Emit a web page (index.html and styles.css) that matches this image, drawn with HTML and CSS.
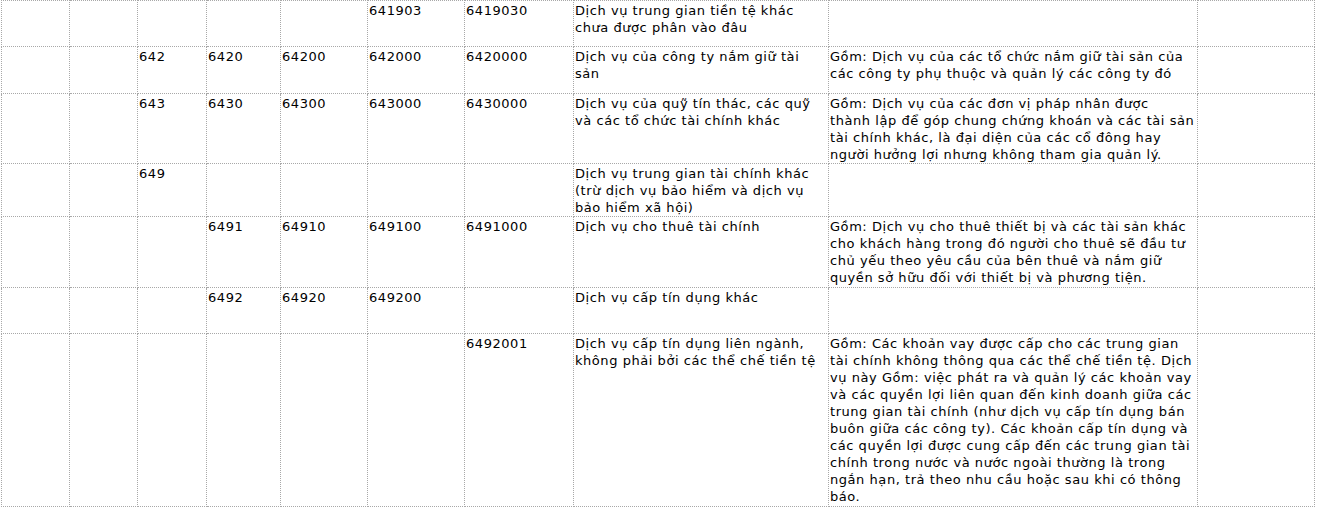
FILE: index.html
```html
<!DOCTYPE html>
<html lang="vi">
<head>
<meta charset="utf-8">
<title>Bảng mã</title>
<link rel="stylesheet" href="styles.css">
</head>
<body>
<div class="wrap">
<table class="codes">
<colgroup>
<col class="c1"><col class="c2"><col class="c3"><col class="c4"><col class="c5"><col class="c6"><col class="c7"><col class="c8"><col class="c9"><col class="c10">
</colgroup>
<tbody>
<tr class="r1"><td></td><td></td><td></td><td></td><td></td><td>641903</td><td>6419030</td><td class="txt">Dịch vụ trung gian tiền tệ khác<br>chưa được phân vào đâu</td><td></td><td></td></tr>
<tr class="r2"><td></td><td></td><td>642</td><td>6420</td><td>64200</td><td>642000</td><td>6420000</td><td class="txt">Dịch vụ của công ty nắm giữ tài<br>sản</td><td class="txt">Gồm: Dịch vụ của các tổ chức nắm giữ tài sản của<br>các công ty phụ thuộc và quản lý các công ty đó</td><td></td></tr>
<tr class="r3"><td></td><td></td><td>643</td><td>6430</td><td>64300</td><td>643000</td><td>6430000</td><td class="txt">Dịch vụ của quỹ tín thác, các quỹ<br>và các tổ chức tài chính khác</td><td class="txt">Gồm: Dịch vụ của các đơn vị pháp nhân được<br>thành lập để góp chung chứng khoán và các tài sản<br>tài chính khác, là đại diện của các cổ đông hay<br>người hưởng lợi nhưng không tham gia quản lý.</td><td></td></tr>
<tr class="r4"><td></td><td></td><td>649</td><td></td><td></td><td></td><td></td><td class="txt">Dịch vụ trung gian tài chính khác<br>(trừ dịch vụ bảo hiểm và dịch vụ<br>bảo hiểm xã hội)</td><td></td><td></td></tr>
<tr class="r5"><td></td><td></td><td></td><td>6491</td><td>64910</td><td>649100</td><td>6491000</td><td class="txt">Dịch vụ cho thuê tài chính</td><td class="txt">Gồm: Dịch vụ cho thuê thiết bị và các tài sản khác<br>cho khách hàng trong đó người cho thuê sẽ đầu tư<br>chủ yếu theo yêu cầu của bên thuê và nắm giữ<br>quyền sở hữu đối với thiết bị và phương tiện.</td><td></td></tr>
<tr class="r6"><td></td><td></td><td></td><td>6492</td><td>64920</td><td>649200</td><td></td><td class="txt">Dịch vụ cấp tín dụng khác</td><td></td><td></td></tr>
<tr class="r7"><td></td><td></td><td></td><td></td><td></td><td></td><td>6492001</td><td class="txt">Dịch vụ cấp tín dụng liên ngành,<br>không phải bởi các thể chế tiền tệ</td><td class="txt">Gồm: Các khoản vay được cấp cho các trung gian<br>tài chính không thông qua các thể chế tiền tệ. Dịch<br>vụ này Gồm: việc phát ra và quản lý các khoản vay<br>và các quyền lợi liên quan đến kinh doanh giữa các<br>trung gian tài chính (như dịch vụ cấp tín dụng bán<br>buôn giữa các công ty). Các khoản cấp tín dụng và<br>các quyền lợi được cung cấp đến các trung gian tài<br>chính trong nước và nước ngoài thường là trong<br>ngắn hạn, trả theo nhu cầu hoặc sau khi có thông<br>báo.</td><td></td></tr>
</tbody>
</table>
</div>
</body>
</html>
```

FILE: styles.css
```css
html, body {
  margin: 0;
  padding: 0;
  background: #ffffff;
}
.wrap {
  padding-left: 1px;
}
.codes {
  border-collapse: collapse;
  table-layout: fixed;
  width: 1314px;
  font-family: "DejaVu Sans", Verdana, sans-serif;
  font-size: 13px;
  line-height: 17px;
  letter-spacing: 0.55px;
  color: #000000;
}
.codes td {
  border: 1px dotted #a8a8a8;
  vertical-align: top;
  padding: 1px 1px 0 1px;
}
.codes td.txt {
  white-space: nowrap;
  overflow: hidden;
}
.c1 { width: 68px; }
.c2 { width: 68px; }
.c3 { width: 69px; }
.c4 { width: 74px; }
.c5 { width: 87px; }
.c6 { width: 97px; }
.c7 { width: 109px; }
.c8 { width: 255px; }
.c9 { width: 369px; }
.c10 { width: 117px; }
.r1 td { height: 44px; }
.r2 td { height: 45px; }
.r3 td { height: 67px; }
.r4 td { height: 50px; }
.r5 td { height: 69px; }
.r6 td { height: 44px; }
.r7 td { height: 171px; }
```
